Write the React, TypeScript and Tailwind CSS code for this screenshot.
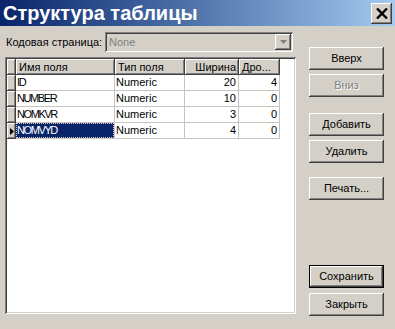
import React from 'react';

const raised =
  'bg-[#d4d0c8] shadow-[inset_-1px_-1px_#404040,inset_1px_1px_#ffffff,inset_-2px_-2px_#808080]';
const sunken =
  'shadow-[inset_1px_1px_#808080,inset_-1px_-1px_#ffffff,inset_2px_2px_#404040,inset_-2px_-2px_#d4d0c8]';

interface Field {
  name: string;
  type: string;
  width: number;
  dec: number;
}

const fields: Field[] = [
  { name: 'ID', type: 'Numeric', width: 20, dec: 4 },
  { name: 'NUMBER', type: 'Numeric', width: 10, dec: 0 },
  { name: 'NOMKVR', type: 'Numeric', width: 3, dec: 0 },
  { name: 'NOMVYD', type: 'Numeric', width: 4, dec: 0 },
];

function WinButton({
  label,
  disabled,
  isDefault,
  className = '',
}: {
  label: string;
  disabled?: boolean;
  isDefault?: boolean;
  className?: string;
}) {
  if (isDefault) {
    return (
      <div className={`w-[75px] h-[23px] border border-black ${className}`}>
        <div className={`w-full h-full flex items-center justify-center ${raised}`}>{label}</div>
      </div>
    );
  }
  return (
    <div
      className={`w-[75px] h-[23px] flex items-center justify-center ${raised} ${
        disabled ? 'text-[#808080] [text-shadow:1px_1px_0_#ffffff]' : ''
      } ${className}`}
    >
      {label}
    </div>
  );
}

function HeaderCell({ label, right }: { label: string; right?: boolean }) {
  return (
    <div className={`h-[16px] flex items-center px-[3px] ${raised} ${right ? 'justify-end' : ''}`}>
      {label}
    </div>
  );
}

export default function App() {
  return (
    <div className="w-[395px] h-[329px] bg-[#d4d0c8] text-[11px] leading-none text-black overflow-hidden font-['Liberation_Sans',Arial,sans-serif]">
      {/* title bar */}
      <div className="h-[26px] flex items-center justify-between pl-[3px] pr-[3px] bg-gradient-to-r from-[#0a246a] to-[#a6caf0]">
        <span className="text-white font-bold text-[20px] leading-none">Структура таблицы</span>
        <div className={`w-[21px] h-[21px] flex items-center justify-center ${raised}`}>
          <svg width="12" height="11" viewBox="0 0 12 11">
            <path d="M1 0.5 L11 10.5 M11 0.5 L1 10.5" stroke="#000" strokeWidth="2.4" />
          </svg>
        </div>
      </div>

      <div className="flex">
        <div className="w-[296px] pl-[5px]">
          <div className="mt-[6px] h-[20px] flex items-center">
            <span className="w-[100px] pl-[1px]">Кодовая страница:</span>
            <div className={`w-[188px] h-[20px] p-[2px] flex items-center ${sunken}`}>
              <span className="flex-1 pl-[2px] text-[#808080]">None</span>
              <div className={`w-[16px] h-[16px] flex items-center justify-center ${raised}`}>
                <svg width="7" height="4" viewBox="0 0 7 4">
                  <path d="M0 0 H7 L3.5 4 Z" fill="#808080" />
                </svg>
              </div>
            </div>
          </div>

          {/* grid */}
          <div className={`mt-[5px] w-[291px] h-[257px] bg-white p-[2px] ${sunken}`}>
            <div className="grid grid-cols-[9px_99px_70px_54px_41px]">
              <div className={`h-[16px] ${raised}`} />
              <HeaderCell label="Имя поля" />
              <HeaderCell label="Тип поля" />
              <HeaderCell label="Ширина" right />
              <HeaderCell label="Дро..." />
              {fields.map((f, i) => {
                const selected = i === fields.length - 1;
                return (
                  <React.Fragment key={f.name}>
                    <div className={`h-[16px] flex items-center justify-center ${raised}`}>
                      {selected && (
                        <svg width="4" height="7" viewBox="0 0 4 7">
                          <path d="M0 0 L4 3.5 L0 7 Z" fill="#000" />
                        </svg>
                      )}
                    </div>
                    <div className="h-[16px] border-r border-b border-[#c8c4bc]">
                      <div
                        className={`h-full flex items-center px-[1px] tracking-[-1.4px] ${
                          selected ? 'bg-[#0a246a] text-white outline outline-1 outline-dotted outline-[#d4d0c8] -outline-offset-1' : ''
                        }`}
                      >
                        {f.name}
                      </div>
                    </div>
                    <div className="h-[16px] flex items-center px-[1px] border-r border-b border-[#c8c4bc]">
                      {f.type}
                    </div>
                    <div className="h-[16px] flex items-center justify-end px-[2px] border-r border-b border-[#c8c4bc]">
                      {f.width}
                    </div>
                    <div className="h-[16px] flex items-center justify-end px-[2px] border-r border-b border-[#c8c4bc]">
                      {f.dec}
                    </div>
                  </React.Fragment>
                );
              })}
            </div>
          </div>
        </div>

        {/* buttons */}
        <div className="ml-[13px] flex flex-col">
          <WinButton label="Вверх" className="mt-[21px]" />
          <WinButton label="Вниз" disabled className="mt-[4px]" />
          <WinButton label="Добавить" className="mt-[16px]" />
          <WinButton label="Удалить" className="mt-[4px]" />
          <WinButton label="Печать..." className="mt-[14px]" />
          <WinButton label="Сохранить" isDefault className="mt-[65px]" />
          <WinButton label="Закрыть" className="mt-[5px]" />
        </div>
      </div>
    </div>
  );
}
